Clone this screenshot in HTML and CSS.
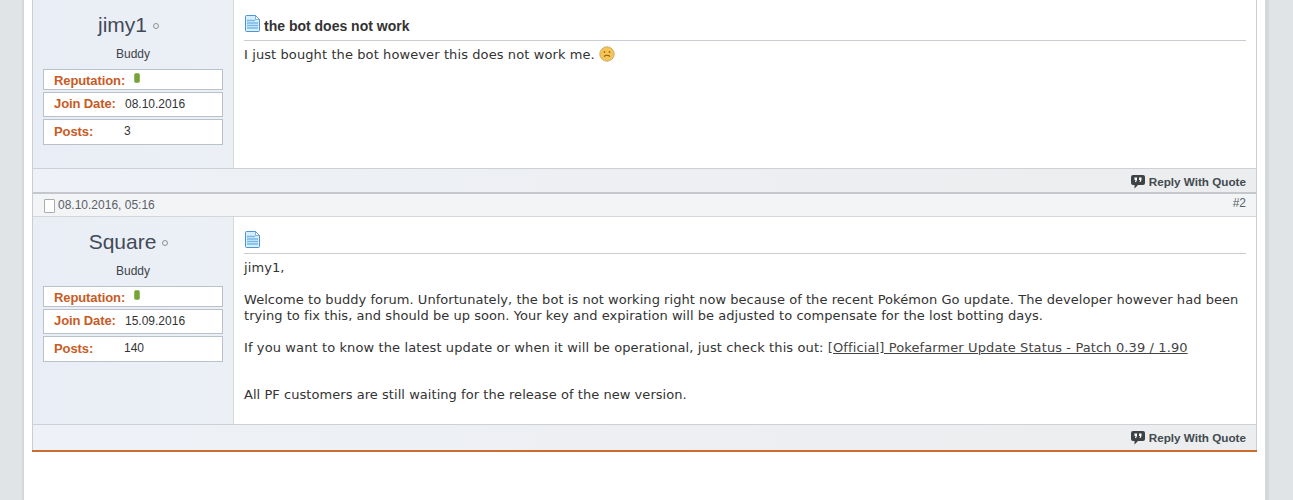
FILE: index.html
```html
<!DOCTYPE html>
<html lang="en">
<head>
  <meta charset="UTF-8">
  <title>the bot does not work</title>
  <link rel="stylesheet" href="styles.css">
</head>
<body>
  <svg class="defs" width="0" height="0">
    <symbol id="doc" viewBox="0 0 15 17">
      <path d="M.5 1.5A1 1 0 0 1 1.5 .5H10.5L14.5 4.5V15.5A1 1 0 0 1 13.5 16.5H1.5A1 1 0 0 1 .5 15.5Z" fill="#d9eefb" stroke="#4f93d2"/>
      <path d="M10.5 .5V4.5H14.5Z" fill="#fff" stroke="#4f93d2" stroke-width=".7"/>
      <path d="M2 5.5H10M2 8H13M2 10.5H13M2 13H13" stroke="#74b8ea" stroke-width="1.6"/>
    </symbol>
    <symbol id="quote" viewBox="0 0 14 14">
      <path d="M2 0H12A2 2 0 0 1 14 2V8A2 2 0 0 1 12 10H7L3.5 13.5V10H2A2 2 0 0 1 0 8V2A2 2 0 0 1 2 0Z" fill="#3e4347"/>
      <path d="M3.5 2.5H6V5L5 7H4L4.6 5H3.5ZM8 2.5H10.5V5L9.5 7H8.5L9.1 5H8Z" fill="#fff"/>
    </symbol>
  </svg>

  <div class="page">
    <div class="post">
      <div class="post-main">
        <div class="userinfo">
          <div class="username">jimy1<span class="status"></span></div>
          <div class="usertitle">Buddy</div>
          <div class="stat stat-rep"><b>Reputation:</b><span class="rep-pill"></span></div>
          <div class="stat stat-join"><b>Join Date:</b><span>08.10.2016</span></div>
          <div class="stat stat-posts"><b>Posts:</b><span>3</span></div>
        </div>
        <div class="content">
          <h2 class="post-title title-first"><svg class="doc-icon"><use href="#doc"/></svg>the bot does not work</h2>
          <div class="post-text">
            <div class="track-wide">I just bought the bot however this does not work me.
              <svg class="smiley" viewBox="0 0 16 16">
                <circle cx="8" cy="8" r="7.2" fill="#f5c455" stroke="#cfae6e"/>
                <circle cx="5.5" cy="6" r=".9" fill="#a0701c"/>
                <circle cx="10.5" cy="6" r=".9" fill="#a0701c"/>
                <path d="M5 10.5Q8 8 11 10.5" fill="none" stroke="#8a5f14" stroke-width="1.2"/>
              </svg>
            </div>
          </div>
        </div>
      </div>
      <div class="post-foot"><a class="reply"><svg class="quote-icon"><use href="#quote"/></svg>Reply With Quote</a></div>
    </div>

    <div class="post post-second">
      <div class="post-head">
        <span class="post-date"><i class="page-icon"></i>08.10.2016, 05:16</span>
        <span class="post-num">#2</span>
      </div>
      <div class="post-main">
        <div class="userinfo">
          <div class="username">Square<span class="status"></span></div>
          <div class="usertitle">Buddy</div>
          <div class="stat stat-rep"><b>Reputation:</b><span class="rep-pill"></span></div>
          <div class="stat stat-join"><b>Join Date:</b><span>15.09.2016</span></div>
          <div class="stat stat-posts"><b>Posts:</b><span>140</span></div>
        </div>
        <div class="content">
          <h2 class="post-title"><svg class="doc-icon"><use href="#doc"/></svg></h2>
          <div class="post-text">
            <div class="track-wide">jimy1,</div>
            <div class="para track-mid">Welcome to buddy forum. Unfortunately, the bot is not working right now because of the recent Pokémon Go update. The developer however had been trying to fix this, and should be up soon. Your key and expiration will be adjusted to compensate for the lost botting days.</div>
            <div class="para track-link">If you want to know the latest update or when it will be operational, just check this out: <a class="link">[Official] Pokefarmer Update Status - Patch 0.39 / 1.90</a></div>
            <div class="para-last track-mid">All PF customers are still waiting for the release of the new version.</div>
          </div>
        </div>
      </div>
      <div class="post-foot"><a class="reply"><svg class="quote-icon"><use href="#quote"/></svg>Reply With Quote</a></div>
    </div>
    <div class="page-end"></div>
  </div>
</body>
</html>
```

FILE: styles.css
```css
html, body { margin: 0; height: 100%; overflow: hidden; }
body { background-color: #e0e4e6; font-family: "DejaVu Sans", sans-serif; color: #3e4347; }

.defs { position: absolute; }

.page {
  width: 1225px;
  height: 500px;
  margin-left: 22px;
  padding: 0 8px 0 8px;
  background-color: #fff;
  border-left: 2px solid #d4d8db;
  border-right: 4px solid #d4d8db;
}

.post {
  border-left: 1px solid #c9ced6;
  border-right: 1px solid #c9ced6;
}

.post-main {
  display: flex;
}

.userinfo {
  box-sizing: border-box;
  width: 201px;
  height: 168px;
  padding: 0 10px;
  flex-shrink: 0;
  background: linear-gradient(to right, #e9eef6, #ebf0f7 80%, #eceff4);
  border-right: 1px solid #d3d8de;
  text-align: center;
}

.post-second .userinfo { height: 207px; }

.username {
  height: 50px;
  font: 21px/50px "Liberation Sans", sans-serif;
  color: #434a57;
  padding-right: 9px;
}

.status {
  display: inline-block;
  box-sizing: border-box;
  width: 6px;
  height: 6px;
  margin-left: 6px;
  vertical-align: 3px;
  border: 1px solid #8b9097;
  border-radius: 50%;
}

.usertitle {
  height: 19px;
  font: 12px/9px "Liberation Sans", sans-serif;
}

.stat {
  box-sizing: border-box;
  display: flex;
  align-items: center;
  width: 180px;
  padding-left: 10px;
  background-color: #fff;
  border: 1px solid #b9c1cb;
  font: 12px "Liberation Sans", sans-serif;
  color: #333;
  text-align: left;
}

.stat b { color: #c75b25; font-size: 13px; letter-spacing: -.1px; }

.stat-rep { height: 21px; margin-bottom: 2px; padding-top: 1px; }
.stat-join { height: 25px; margin-bottom: 2px; padding-bottom: 2px; }
.stat-posts { height: 26px; padding-bottom: 2px; }

.stat-join b { width: 71px; }
.stat-posts b { width: 70px; }

.rep-pill {
  width: 6px;
  height: 10px;
  margin: -5px 0 0 9px;
  background-color: #76a23a;
  border: 1px solid #93ba5e;
  box-sizing: border-box;
  border-radius: 2px;
}

.content {
  flex: 1;
  padding: 0 10px;
  min-width: 0;
}

.post-title {
  display: flex;
  align-items: flex-end;
  margin: 0;
  height: 37px;
  padding-bottom: 5px;
  border-bottom: 1px solid #c9ccd0;
  font: bold 14px/18px "Liberation Sans", sans-serif;
  color: #333;
  box-sizing: border-box;
}

.title-first { height: 41px; }

.doc-icon {
  width: 15px;
  height: 17px;
  margin-left: 1px;
  margin-right: 4px;
  flex-shrink: 0;
}

.title-first .doc-icon { margin-bottom: 3px; }

.post-text {
  padding-top: 5px;
  font-size: 13px;
  line-height: 16px;
  color: #333;
}

.post-second .post-text { padding-top: 6px; }

.para { margin-top: 16px; }
.para-last { margin-top: 31px; }

.track-wide { letter-spacing: .1px; }
.track-mid { letter-spacing: .05px; }
.track-link { letter-spacing: .11px; }

.smiley {
  width: 16px;
  height: 16px;
  vertical-align: -3px;
}

.link { text-decoration: underline; color: #444; }

.post-foot {
  box-sizing: border-box;
  height: 26px;
  padding: 5px 10px 0 0;
  border-top: 1px solid #cdd1d6;
  background: linear-gradient(to right, #eef1f7, #ecedee);
  text-align: right;
}

.post-foot:not(.post-second .post-foot) { border-bottom: 2px solid #c4c8cc; }

.reply {
  display: inline-flex;
  align-items: center;
  font: bold 11.7px/16px "Liberation Sans", sans-serif;
  color: #434a50;
}

.quote-icon { width: 14px; height: 14px; margin-right: 4px; }

.post-head {
  box-sizing: border-box;
  display: flex;
  justify-content: space-between;
  height: 23px;
  padding: 0 10px 0 11px;
  background-color: #f2f4f6;
  border-bottom: 1px solid #d3d6da;
  font: 12px/22px "Liberation Sans", sans-serif;
  color: #5a6068;
}

.post-date { display: flex; align-items: center; }

.page-icon {
  box-sizing: border-box;
  width: 11px;
  height: 14px;
  margin: 2px 3px 0 0;
  background-color: #fff;
  border: 1px solid #a9adb2;
  border-radius: 1px;
}

.post-num { line-height: 18px; }

.page-end {
  height: 2px;
  background-color: #cb6c31;
}
```
